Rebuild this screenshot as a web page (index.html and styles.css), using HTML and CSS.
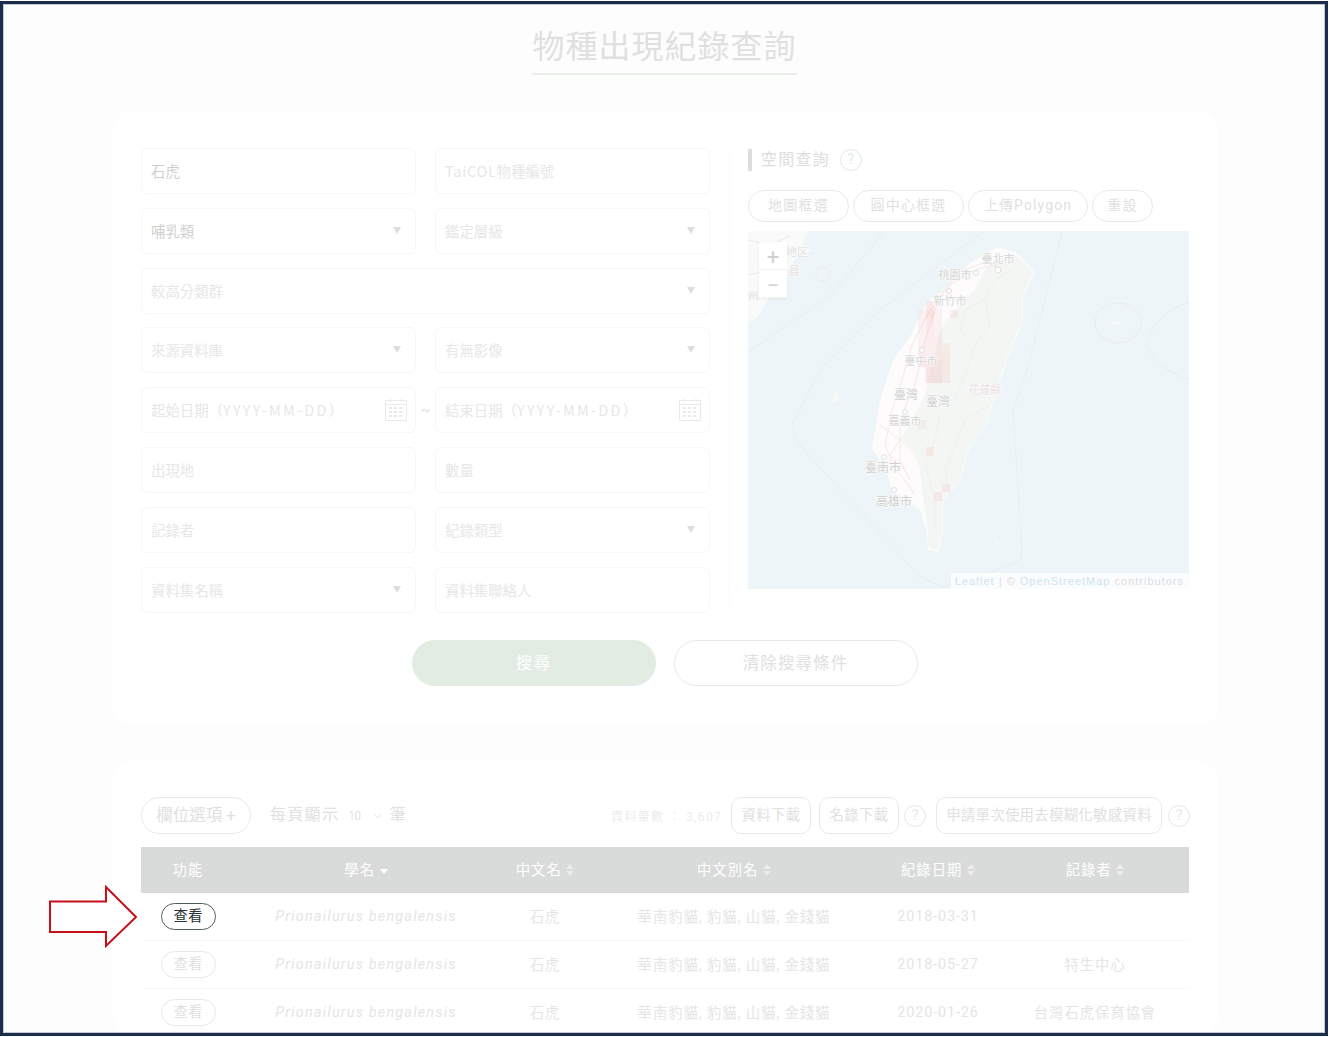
FILE: index.html
```html
<!DOCTYPE html>
<html lang="zh-Hant">
<head>
	<meta charset="UTF-8">
	<title>物種出現紀錄查詢</title>
	<link rel="stylesheet" href="styles.css">
</head>
<body>
	<div class="frame">
		<div class="title_wrap"><h1 class="title">物種出現紀錄查詢</h1></div>

		<div class="card search_card">
			<div class="search_top">
				<div class="form">
					<div class="row">
						<div class="field value">石虎</div>
						<div class="field"><span class="latin">TaiCOL</span>物種編號</div>
					</div>
					<div class="row">
						<div class="field select value">哺乳類</div>
						<div class="field select">鑑定層級</div>
					</div>
					<div class="row">
						<div class="field select wide">較高分類群</div>
					</div>
					<div class="row">
						<div class="field select">來源資料庫</div>
						<div class="field select">有無影像</div>
					</div>
					<div class="row">
						<div class="field date">起始日期（<span class="latin">YYYY-MM-DD</span>）
							<svg class="cal" viewBox="0 0 24 24"><path d="M1.500 3.500h21v20h-21zM1.500 7.500h21M6 1v4M18 1v4"/><path class="cal_dots" d="M5 10h3v2H5zM10 10h3v2h-3zM15 10h3v2h-3zM5 14h3v2H5zM10 14h3v2h-3zM15 14h3v2h-3zM5 18h3v2H5zM10 18h3v2h-3zM15 18h3v2h-3z"/></svg>
						</div>
						<span class="tilde">~</span>
						<div class="field date">結束日期（<span class="latin">YYYY-MM-DD</span>）
							<svg class="cal" viewBox="0 0 24 24"><path d="M1.500 3.500h21v20h-21zM1.500 7.500h21M6 1v4M18 1v4"/><path class="cal_dots" d="M5 10h3v2H5zM10 10h3v2h-3zM15 10h3v2h-3zM5 14h3v2H5zM10 14h3v2h-3zM15 14h3v2h-3zM5 18h3v2H5zM10 18h3v2h-3zM15 18h3v2h-3z"/></svg>
						</div>
					</div>
					<div class="row">
						<div class="field">出現地</div>
						<div class="field">數量</div>
					</div>
					<div class="row">
						<div class="field">記錄者</div>
						<div class="field select">紀錄類型</div>
					</div>
					<div class="row">
						<div class="field select">資料集名稱</div>
						<div class="field">資料集聯絡人</div>
					</div>
				</div>

				<div class="space">
					<div class="space_head">
						<span class="space_title">空間查詢</span>
						<span class="help">?</span>
					</div>
					<div class="space_btns">
						<span class="pill pill_map">地圖框選</span>
						<span class="pill pill_circle">圓中心框選</span>
						<span class="pill pill_upload">上傳Polygon</span>
						<span class="pill pill_reset">重設</span>
					</div>
					<div class="map">
						<svg class="map_svg" viewBox="748 231 441 358">
							<rect x="748" y="231" width="441" height="358" fill="#eef5f8"/>
							<!-- china coast -->
							<path d="M748 231H808L802 246L812 250L796 258L790 268L772 285L768 300L757 318L748 322Z" fill="#fbfafa"/>
							<g fill="none" stroke="#f6e3e6" stroke-width="1">
								<path d="M748 240L770 245L790 236M775 245L772 270L758 300M748 275L772 270"/>
							</g>
							<!-- sea borders -->
							<g fill="none" stroke="#e9ecef" stroke-width="1">
								<path d="M748 352L830 296L883 233"/>
								<path d="M983 232L880 310L820 370L793 423C792 432 796 442 806 452L920 577L943 587L997 570L1019 560C1023 556 1022 548 1021 535L1013 410L1027 370L1062 232"/>
								<ellipse cx="1118" cy="323" rx="23" ry="20"/>
								<circle cx="823" cy="274" r="7"/>
								<path d="M1189 303C1168 306 1150 328 1147 342C1148 356 1170 376 1189 379"/>
							</g>
							<!-- taiwan -->
							<path d="M997 247L1017 253L1035 272L1023 297L1023 320L1007 360L997 390L987 423L970 447L960 480L943 503L943 533L938 552L928 550L927 533L920 510L910 503L893 493L887 473L872 448L880 400L893 360L910 337L927 303L947 287L970 263Z" fill="#fdfbfb"/>
							<path d="M997 256L1017 256L1033 272L1022 297L1022 320L1006 360L996 390L986 423L969 447L959 480L942 503L942 533L937 550L929 548L927 520L922 490L920 470L915 455L900 440L915 415L925 395L940 330L955 310L975 290L985 270Z" fill="#f3f6f2"/>
							<!-- roads -->
							<g fill="none" stroke="#f8e6e8" stroke-width="1">
								<path d="M1000 263L975 270L950 285L930 310L912 345L905 370L892 410L885 445L895 470L905 480L915 495"/>
								<path d="M1000 268L985 262L960 272L940 295L925 340L915 385L900 420L900 460L910 480"/>
								<path d="M880 425L900 440L890 455L905 470"/>
							</g>
							<g fill="none" stroke="#edf0ec" stroke-width="1">
								<path d="M1015 268L995 280L985 300L990 325L975 345L965 375L955 400L940 415L935 440L925 465L935 500L935 530"/>
								<path d="M985 300L965 310L960 330L975 345"/>
								<path d="M990 405L965 420L955 445L945 470L950 495"/>
							</g>
							<!-- penghu and small islands -->
							<path d="M829 405L840 399L835 390L832 402Z" fill="#f8f9f9"/>
							<path d="M995 538L1000 545L997 543Z M1110 322H1124L1117 324Z" fill="#fbfcfc"/>
							<!-- occurrence grid -->
							<g fill="#f4a6ac" class="grid">
								<rect x="926" y="301" width="8" height="9" opacity=".4"/><rect x="934" y="301" width="8" height="9" opacity=".16"/>
								<rect x="918" y="310" width="8" height="8" opacity=".2"/><rect x="926" y="310" width="8" height="8" opacity=".55"/><rect x="934" y="310" width="8" height="8" opacity=".2"/><rect x="950" y="310" width="8" height="8" opacity=".25"/>
								<rect x="918" y="318" width="8" height="9" opacity=".2"/><rect x="926" y="318" width="8" height="9" opacity=".4"/><rect x="934" y="318" width="8" height="9" opacity=".2"/>
								<rect x="918" y="327" width="8" height="8" opacity=".16"/><rect x="926" y="327" width="8" height="8" opacity=".3"/><rect x="934" y="327" width="8" height="8" opacity=".16"/>
								<rect x="918" y="335" width="8" height="8" opacity=".16"/><rect x="926" y="335" width="16" height="8" opacity=".3"/>
								<rect x="918" y="343" width="24" height="9" opacity=".25"/><rect x="942" y="343" width="8" height="9" opacity=".2"/>
								<rect x="918" y="352" width="24" height="8" opacity=".3"/><rect x="942" y="352" width="8" height="8" opacity=".25"/>
								<rect x="918" y="360" width="8" height="7" opacity=".4"/><rect x="926" y="360" width="16" height="7" opacity=".45"/><rect x="942" y="360" width="8" height="7" opacity=".3"/>
								<rect x="926" y="367" width="8" height="8" opacity=".5"/><rect x="934" y="367" width="8" height="8" opacity=".45"/><rect x="942" y="367" width="8" height="8" opacity=".3"/>
								<rect x="926" y="375" width="16" height="8" opacity=".5"/><rect x="942" y="375" width="8" height="8" opacity=".25"/>
								<rect x="918" y="420" width="8" height="9" opacity=".2"/>
								<rect x="926" y="447" width="8" height="9" opacity=".25"/>
								<rect x="942" y="484" width="8" height="8" opacity=".25"/>
								<rect x="934" y="492" width="8" height="9" opacity=".25"/>
							</g>
							<!-- city dots -->
							<g fill="#fff" stroke="#dfe0e0" stroke-width="1">
								<circle cx="998" cy="270" r="3"/><circle cx="976" cy="273" r="2.500"/><circle cx="949" cy="291" r="2.500"/><circle cx="922" cy="350" r="2.500"/><circle cx="905" cy="412" r="2.500"/><circle cx="884" cy="457" r="2.500"/><circle cx="894" cy="490" r="2.500"/>
							</g>
							<g class="map_label">
								<text x="998" y="263">臺北市</text>
								<text x="955" y="279">桃園市</text>
								<text x="950" y="305">新竹市</text>
								<text x="921" y="365">臺中市</text>
								<text x="906" y="399" class="big">臺灣</text>
								<text x="938" y="406" class="big">臺灣</text>
								<text x="985" y="394" class="pale">花蓮縣</text>
								<text x="905" y="425">嘉義市</text>
								<text x="883" y="472" class="big">臺南市</text>
								<text x="894" y="506" class="big">高雄市</text>
								<text x="797" y="256" class="side">地区</text>
								<text x="794" y="275" class="side">县</text>
								<text x="753" y="300" class="side">州</text>
							</g>
						</svg>
						<div class="zoom_ctl">
							<span class="zoom_btn">+</span>
							<span class="zoom_btn">−</span>
						</div>
						<div class="attrib"><span class="attrib_link">Leaflet</span> | © <span class="attrib_link">OpenStreetMap</span> contributors</div>
					</div>
				</div>
			</div>
			<div class="search_btns">
				<span class="big_btn big_btn_green">搜尋</span>
				<span class="big_btn">清除搜尋條件</span>
			</div>
		</div>

		<div class="card result_card">
			<div class="toolbar">
				<span class="col_btn">欄位選項 +</span>
				<span class="per_page">每頁顯示</span>
				<span class="per_num">10</span>
				<svg class="chev" viewBox="0 0 10 6"><path d="M1 1l4 4 4-4"/></svg>
				<span class="per_page">筆</span>
				<span class="count">資料筆數 ： 3,607</span>
				<span class="dl_btn">資料下載</span>
				<span class="dl_btn">名錄下載</span>
				<span class="help">?</span>
				<span class="dl_btn sens">申請單次使用去模糊化敏感資料</span>
				<span class="help">?</span>
			</div>
			<table class="result">
				<colgroup>
					<col class="c1"><col class="c2"><col class="c3"><col class="c4"><col class="c5"><col class="c6">
				</colgroup>
				<thead>
					<tr>
						<th>功能</th>
						<th>學名 <span class="sort_down"></span></th>
						<th>中文名 <span class="sort"></span></th>
						<th>中文別名 <span class="sort"></span></th>
						<th>紀錄日期 <span class="sort"></span></th>
						<th>記錄者 <span class="sort"></span></th>
					</tr>
				</thead>
				<tbody>
					<tr>
						<td class="low"><span class="view active">查看</span></td>
						<td class="sci low">Prionailurus bengalensis</td>
						<td>石虎</td>
						<td>華南豹貓, 豹貓, 山貓, 金錢貓</td>
						<td class="low">2018-03-31</td>
						<td></td>
					</tr>
					<tr>
						<td class="low"><span class="view">查看</span></td>
						<td class="sci low">Prionailurus bengalensis</td>
						<td>石虎</td>
						<td>華南豹貓, 豹貓, 山貓, 金錢貓</td>
						<td class="low">2018-05-27</td>
						<td>特生中心</td>
					</tr>
					<tr>
						<td class="low"><span class="view">查看</span></td>
						<td class="sci low">Prionailurus bengalensis</td>
						<td>石虎</td>
						<td>華南豹貓, 豹貓, 山貓, 金錢貓</td>
						<td class="low">2020-01-26</td>
						<td>台灣石虎保育協會</td>
					</tr>
				</tbody>
			</table>
		</div>

		<svg class="arrow" viewBox="0 0 92 64"><path d="M2 16.500H58V2L88 32L58 61V47H2Z"/></svg>
	</div>
</body>
</html>
```
FILE: styles.css
```css
*{
	margin: 0;
	padding: 0;
	box-sizing: border-box;
}
html,body{
	width: 1329px;
	height: 1037px;
	overflow: hidden;
	background: #fff;
}
body{
	font-family: Roboto, "Noto Sans CJK TC", sans-serif;
	color: #e4e6e4;
	padding-top: 1px;
}
.frame{
	position: relative;
	width: 1328px;
	height: 1035px;
	overflow: hidden;
	background: #fdfdfd;
	border: 3px solid #1c2c4c;
	padding: 0 107px 0 110px;
}
.frame::after{
	content: "";
	position: absolute;
	inset: 0;
	border: 1px solid #c4c8d0;
	pointer-events: none;
}
.title_wrap{
	display: flex;
	justify-content: center;
	padding: 21px 2px 0 0;
}
.title{
	font-size: 32px;
	font-weight: 400;
	letter-spacing: 1px;
	line-height: 44px;
	padding-bottom: 4px;
	color: #dfe1df;
	border-bottom: 2px solid #e8efe6;
}
.card{
	background: #fff;
	border-radius: 20px;
}
.search_card{
	margin-top: 36px;
	height: 615px;
	padding: 37px 28px 0;
}
.search_top{
	display: flex;
}
.form{
	width: 589px;
	padding-right: 19px;
	border-right: 1px solid #fbfbfb;
	display: flex;
	flex-direction: column;
	gap: 13.800px;
}
.row{
	display: flex;
	justify-content: space-between;
	align-items: center;
}
.field{
	position: relative;
	width: 275px;
	height: 46px;
	border: 1px solid #f6f7f6;
	border-radius: 6px;
	padding-left: 9px;
	font-family: "Noto Sans CJK TC", sans-serif;
	font-size: 14.400px;
	line-height: 43px;
	color: #e6e8e6;
	background: #fff;
}
.latin{
	letter-spacing: .8px;
}
.date .latin{
	letter-spacing: 2.300px;
}
.field.value{
	color: #ced0ce;
}
.field.wide{
	width: 100%;
}
.select::after{
	content: "";
	position: absolute;
	right: 14px;
	top: 18px;
	border-left: 4.500px solid transparent;
	border-right: 4.500px solid transparent;
	border-top: 7px solid #dcdedc;
}
.cal{
	position: absolute;
	right: 7px;
	top: 9px;
	width: 24px;
	height: 24px;
	fill: none;
	stroke: #e9ebe9;
	stroke-width: 1;
}
.cal_dots{
	fill: #e9ebe9;
	stroke: none;
}
.tilde{
	font-size: 14px;
	color: #dddfdd;
}
.space{
	margin-left: 18px;
	width: 441px;
}
.space_head{
	display: flex;
	align-items: center;
	gap: 10px;
	height: 22px;
	margin-top: 1px;
}
.space_title{
	border-left: 4px solid #dcdedc;
	padding-left: 9px;
	font-size: 16px;
	letter-spacing: 1.200px;
	line-height: 22px;
	color: #dcdedc;
}
.help{
	display: inline-block;
	width: 22px;
	height: 22px;
	flex: none;
	border: 1.500px solid #e3ece2;
	border-radius: 50%;
	font-size: 14px;
	line-height: 19px;
	text-align: center;
	color: #e3ece2;
}
.space_btns{
	display: flex;
	gap: 4px;
	margin-top: 19px;
	margin-bottom: 9px;
}
.pill{
	height: 32px;
	border: 1px solid #e8eae8;
	border-radius: 16px;
	font-size: 14px;
	line-height: 28px;
	letter-spacing: 1.200px;
	text-align: center;
	color: #dfe1df;
}
.pill_map{ width: 101px; }
.pill_circle{ width: 111px; }
.pill_upload{ width: 120px; letter-spacing: 1.100px; }
.pill_reset{ width: 61px; }
.map{
	position: relative;
	width: 441px;
	height: 358px;
	overflow: hidden;
}
.map_svg{
	display: block;
	width: 441px;
	height: 358px;
}
.grid{
	opacity: .55;
}
.map_label{
	font-size: 11px;
	fill: #d6d6d6;
	text-anchor: middle;
	paint-order: stroke;
	stroke: #fbfbfb;
	stroke-width: 1.500px;
}
.map_label .big{
	font-size: 12px;
	fill: #d0d0d0;
}
.map_label .pale{
	fill: #ecdfe4;
}
.map_label .side{
	fill: #e2e2e2;
}
.zoom_ctl{
	position: absolute;
	left: 11px;
	top: 11px;
	width: 28px;
	height: 56px;
	display: flex;
	flex-direction: column;
	background: #fff;
	border-radius: 2px;
	box-shadow: 0 1px 3px rgba(0,0,0,.06);
}
.zoom_btn{
	height: 28px;
	font-size: 22px;
	line-height: 32px;
	text-align: center;
	color: #cfd1cf;
	border-bottom: 1px solid #f4f4f4;
}
.attrib{
	position: absolute;
	right: 0;
	bottom: 0;
	height: 16px;
	padding: 0 5px 0 4px;
	font-family: "Liberation Sans", sans-serif;
	font-size: 11px;
	letter-spacing: 1px;
	line-height: 16px;
	white-space: nowrap;
	color: #dcdedf;
	background: #fbfcfd;
}
.attrib_link{
	color: #cfe4f0;
}
.search_btns{
	display: flex;
	justify-content: center;
	gap: 18px;
	margin-top: 27px;
	padding-right: 2px;
}
.big_btn{
	width: 244px;
	height: 46px;
	border: 1px solid #e8eae8;
	border-radius: 23px;
	font-size: 16.500px;
	line-height: 46px;
	letter-spacing: 1.100px;
	text-align: center;
	color: #dfe1df;
}
.big_btn_green{
	background: #e3ece3;
	border-color: #e3ece3;
	color: #fff;
}
.result_card{
	margin-top: 35px;
	padding: 36px 28px 0;
}
.toolbar{
	display: flex;
	align-items: center;
	height: 37px;
	margin-bottom: 14px;
}
.col_btn{
	width: 110px;
	height: 37px;
	border: 1px solid #e8eae8;
	border-radius: 19px;
	font-size: 16.500px;
	line-height: 35px;
	text-align: center;
	color: #dfe1df;
}
.per_page{
	font-size: 16px;
	letter-spacing: 1.300px;
	line-height: 36px;
	height: 37px;
	color: #dfe1df;
}
.col_btn + .per_page{
	margin-left: 19px;
}
.per_num{
	margin-left: 9px;
	font-size: 12px;
	font-weight: 300;
	letter-spacing: -.5px;
	color: #d4d6d4;
}
.chev{
	width: 9px;
	height: 6px;
	margin: 0 8px 0 12px;
	fill: none;
	stroke: #dcdedc;
}
.count{
	margin-left: auto;
	margin-right: 9px;
	font-size: 12px;
	letter-spacing: 1.300px;
	color: #eceeec;
}
.dl_btn{
	width: 80px;
	height: 37px;
	border: 1px solid #e8eae8;
	border-radius: 10px;
	font-size: 14.400px;
	letter-spacing: .3px;
	line-height: 35px;
	text-align: center;
	color: #dfe1df;
	margin-right: 8px;
}
.dl_btn + .help{
	margin-left: -3px;
	margin-right: 10px;
}
.sens{
	width: 226px;
	margin-right: 6px;
}
.sens + .help{
	margin: 0;
}
.result{
	width: 1048px;
	margin-top: -1px;
	border-collapse: collapse;
	table-layout: fixed;
	font-size: 14.400px;
}
.c1{ width: 94px; }
.c2{ width: 262px; }
.c3{ width: 96px; }
.c4{ width: 282px; }
.c5{ width: 126px; }
.c6{ width: 188px; }
.result th{
	height: 46px;
	padding-bottom: 4px;
	background: #d9dbda;
	color: #fff;
	font-weight: 400;
	letter-spacing: 1px;
	text-align: center;
}
.result td{
	height: 47.700px;
	padding-bottom: 2px;
	text-align: center;
	letter-spacing: .9px;
	color: #e4e6e4;
	border-bottom: 1px solid #f7f7f7;
}
.result td.low{
	padding-bottom: 0;
}
.result td.sci{
	font-style: italic;
	letter-spacing: 1.200px;
}
.sort,.sort_down{
	display: inline-block;
	position: relative;
	width: 8px;
	height: 12px;
	vertical-align: -1px;
}
.sort::before,.sort::after{
	content: "";
	position: absolute;
	left: 0;
	border-left: 4px solid transparent;
	border-right: 4px solid transparent;
}
.sort::before{
	top: 0;
	border-bottom: 5px solid #ebecec;
}
.sort::after{
	bottom: 0;
	border-top: 5px solid #ebecec;
}
.sort_down::after{
	content: "";
	position: absolute;
	left: 0;
	top: 5px;
	border-left: 4px solid transparent;
	border-right: 4px solid transparent;
	border-top: 5px solid #fff;
}
.view{
	display: inline-block;
	width: 55px;
	height: 27px;
	border: 1px solid #e8eae8;
	border-radius: 14px;
	font-size: 14.400px;
	line-height: 25px;
	letter-spacing: 0;
	color: #e0e2e0;
}
.view.active{
	border-color: #4e5f5a;
	color: #2b3532;
}
.arrow{
	position: absolute;
	left: 45px;
	top: 881px;
	width: 92px;
	height: 64px;
	fill: #fff;
	stroke: #c8101a;
	stroke-width: 2;
}
```
